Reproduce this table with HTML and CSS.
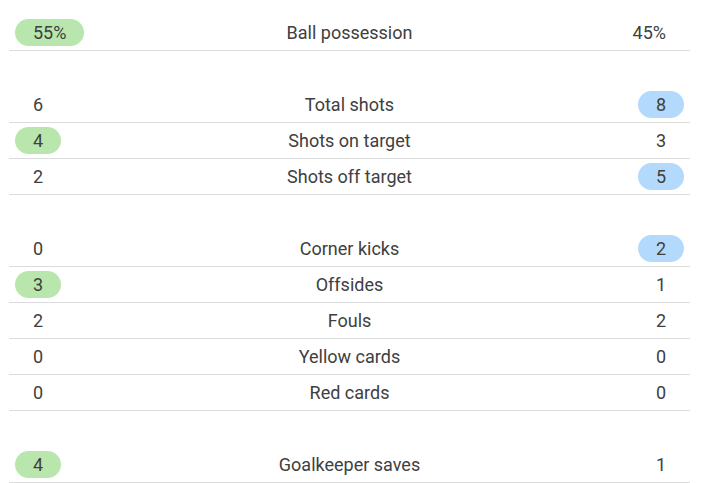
FILE: index.html
```html
<!DOCTYPE html>
<html>
<head>
<meta charset="utf-8">
<link rel="stylesheet" href="styles.css">
</head>
<body>
<div class="stats">
  <div class="group">
    <div class="row"><div class="home"><span class="pill green">55%</span></div><div class="label">Ball possession</div><div class="away"><span class="val">45%</span></div></div>
  </div>
  <div class="group">
    <div class="row"><div class="home"><span class="val">6</span></div><div class="label">Total shots</div><div class="away"><span class="pill blue">8</span></div></div>
    <div class="row"><div class="home"><span class="pill green">4</span></div><div class="label">Shots on target</div><div class="away"><span class="val">3</span></div></div>
    <div class="row"><div class="home"><span class="val">2</span></div><div class="label">Shots off target</div><div class="away"><span class="pill blue">5</span></div></div>
  </div>
  <div class="group">
    <div class="row"><div class="home"><span class="val">0</span></div><div class="label">Corner kicks</div><div class="away"><span class="pill blue">2</span></div></div>
    <div class="row"><div class="home"><span class="pill green">3</span></div><div class="label">Offsides</div><div class="away"><span class="val">1</span></div></div>
    <div class="row"><div class="home"><span class="val">2</span></div><div class="label">Fouls</div><div class="away"><span class="val">2</span></div></div>
    <div class="row"><div class="home"><span class="val">0</span></div><div class="label">Yellow cards</div><div class="away"><span class="val">0</span></div></div>
    <div class="row"><div class="home"><span class="val">0</span></div><div class="label">Red cards</div><div class="away"><span class="val">0</span></div></div>
  </div>
  <div class="group">
    <div class="row"><div class="home"><span class="pill green">4</span></div><div class="label">Goalkeeper saves</div><div class="away"><span class="val">1</span></div></div>
  </div>
</div>
</body>
</html>
```
FILE: styles.css
```css
html, body {
  margin: 0;
  padding: 0;
  background: #fff;
}
body {
  font-family: Roboto, "Liberation Sans", sans-serif;
  font-size: 18px;
  color: #404040;
}
.stats {
  margin: 0 17px 0 9px;
  padding-top: 15px;
  display: flex;
  flex-direction: column;
  gap: 36px;
}
.row {
  display: grid;
  grid-template-columns: 1fr auto 1fr;
  align-items: center;
  height: 34px;
  padding-bottom: 1px;
  border-bottom: 1px solid #dcdcdc;
}
.home {
  padding-left: 6px;
  display: flex;
  justify-content: flex-start;
}
.away {
  padding-right: 6px;
  display: flex;
  justify-content: flex-end;
}
.label {
  text-align: center;
}
.val, .pill {
  display: inline-block;
  padding: 0 18px;
  height: 27px;
  line-height: 27px;
  border-radius: 14px;
}
.green { background: #b9e6ac; }
.blue { background: #b3dafc; }
```
